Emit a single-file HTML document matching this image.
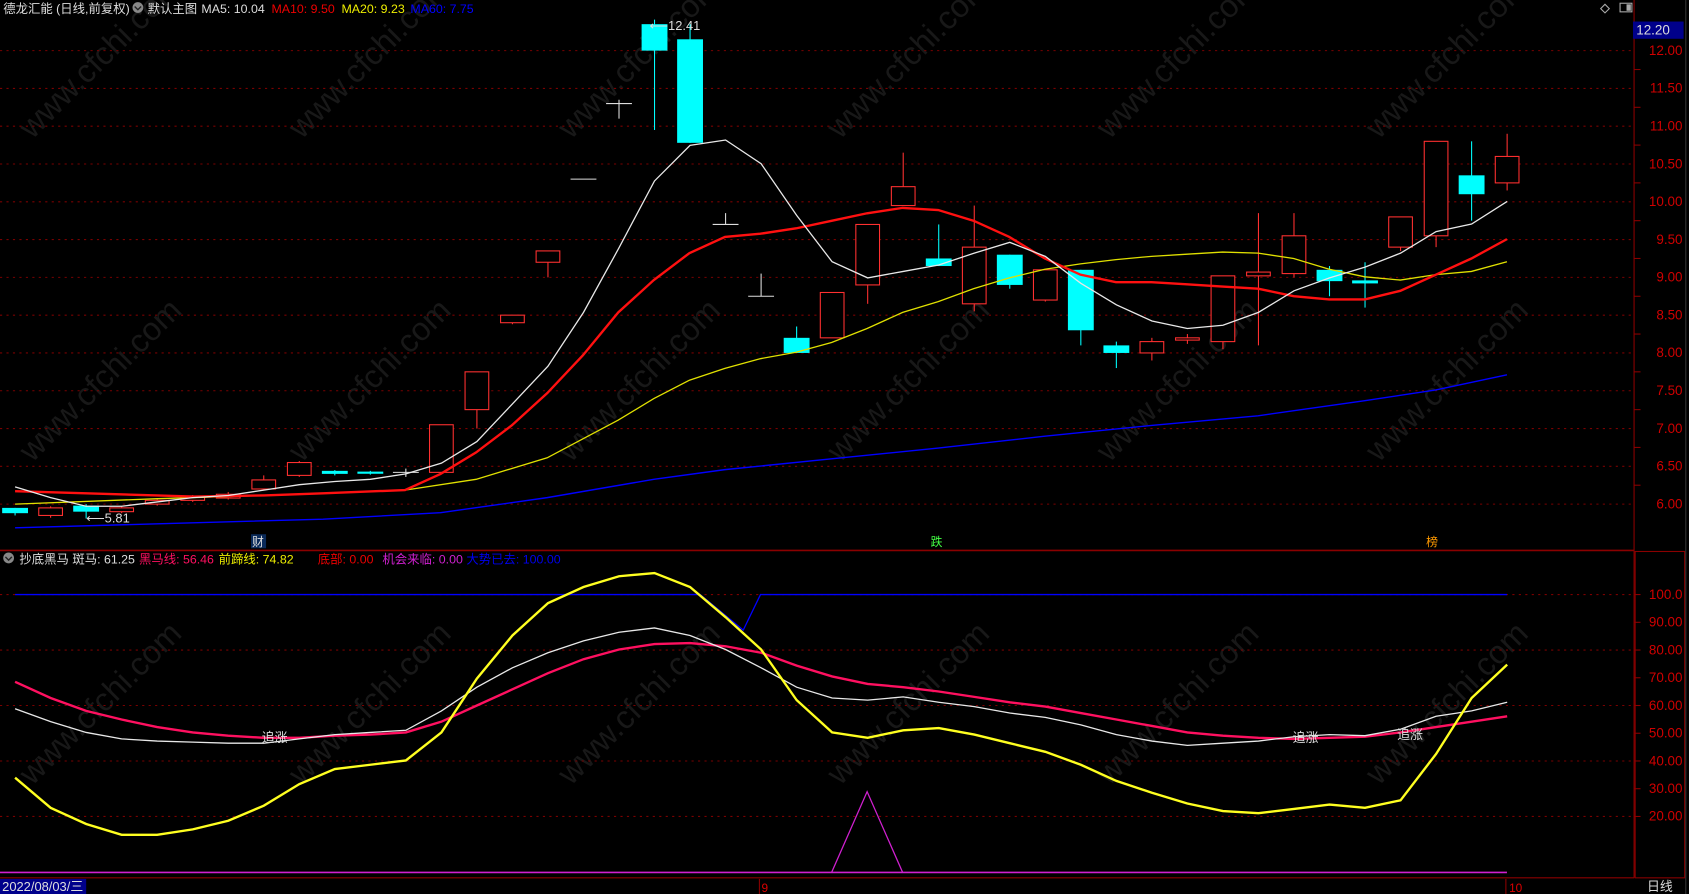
<!DOCTYPE html>
<html><head><meta charset="utf-8"><style>
html,body{margin:0;padding:0;background:#000;overflow:hidden}
svg{display:block}
text{font-family:"Liberation Sans","Noto Sans CJK SC",sans-serif}
</style></head><body>
<svg id="s" width="1689" height="894" viewBox="0 0 1568 830" preserveAspectRatio="none" xmlns="http://www.w3.org/2000/svg">
<rect width="1568" height="830" fill="#000"/>
<g id="wm" fill="#181818" font-size="30"></g>
<g id="grid"></g>
<line x1="0" y1="511" x2="1517" y2="511" stroke="#8b0000" stroke-width="1.5"/>
<line x1="1517" y1="0" x2="1517" y2="815" stroke="#8b0000"/>
<rect x="1518" y="512" width="46" height="303" fill="none" stroke="#8b0000"/>
<line x1="0" y1="815" x2="1517" y2="815" stroke="#8b0000"/>
<line x1="1565" y1="0" x2="1565" y2="830" stroke="#333"/>
<g id="axis" fill="#d00000" font-size="12.5"></g>
<g id="main"></g>
<g id="ind"></g>
<text x="3" y="12" font-size="11.5" fill="#ddd">德龙汇能 (日线,前复权)</text>
<circle cx="128" cy="7" r="5" fill="#888"/><path d="M125,6 l3,3 l3,-3" stroke="#222" fill="none" stroke-width="1.3"/>
<text x="137" y="12" font-size="11.5" fill="#ddd">默认主图</text>
<text x="187" y="12" font-size="11.5" fill="#ddd">MA5: 10.04</text>
<text x="252" y="12" font-size="11.5" fill="#e00">MA10: 9.50</text>
<text x="317" y="12" font-size="11.5" fill="#ee0">MA20: 9.23</text>
<text x="381" y="12" font-size="11.5" fill="#00f">MA60: 7.75</text>
<path d="M1490,4 l4,4 l-4,4 l-4,-4z" stroke="#aaa" fill="none"/>
<rect x="1504" y="3" width="11" height="8" fill="none" stroke="#aaa"/><rect x="1510" y="4" width="4" height="6" fill="#aaa"/>
<rect x="1516" y="20" width="47" height="16" fill="#00008b"/>
<text x="1519" y="32" font-size="12.5" fill="#ddd">12.20</text>
<circle cx="8" cy="518" r="5" fill="#888"/><path d="M5,517 l3,3 l3,-3" stroke="#222" fill="none" stroke-width="1.3"/>
<text x="18" y="523" font-size="11.5" fill="#ddd">抄底黑马  斑马: 61.25</text>
<text x="129" y="523" font-size="11.5" fill="#ff1060">黑马线: 56.46</text>
<text x="203" y="523" font-size="11.5" fill="#ee0">前蹄线: 74.82</text>
<text x="295" y="523" font-size="11.5" fill="#e00">底部: 0.00</text>
<text x="355" y="523" font-size="11.5" fill="#d020d0">机会来临: 0.00</text>
<text x="433" y="523" font-size="11.5" fill="#0000ee">大势已去: 100.00</text>
<rect x="233" y="496" width="14" height="13" fill="#0a2a5a"/><text x="234" y="507" font-size="11" fill="#ddd">财</text>
<text x="864" y="507" font-size="11" fill="#4f4">跌</text>
<text x="1324" y="507" font-size="11" fill="#f90">榜</text>
<text x="603" y="28" font-size="12" fill="#ddd">⟵12.41</text>
<text x="80" y="485" font-size="12" fill="#ddd">⟵5.81</text>
<text x="243" y="689" font-size="12" fill="#ddd">追涨</text>
<text x="1200" y="689" font-size="12" fill="#ddd">追涨</text>
<text x="1297" y="686" font-size="12" fill="#ddd">追涨</text>
<rect x="0" y="816" width="80" height="14" fill="#00008b"/>
<text x="2" y="827" font-size="12" fill="#ddd">2022/08/03/三</text>
<line x1="705" y1="816" x2="705" y2="830" stroke="#8b0000"/><text x="707" y="828" font-size="11" fill="#d00">9</text>
<line x1="1398" y1="816" x2="1398" y2="830" stroke="#8b0000"/><text x="1401" y="828" font-size="11" fill="#d00">10</text>
<text x="1529" y="827" font-size="12" fill="#ddd">日线</text>
</svg>
<script>
var NS="http://www.w3.org/2000/svg";
function el(p,t,a,txt){var e=document.createElementNS(NS,t);for(var k in a)e.setAttribute(k,a[k]);if(txt)e.textContent=txt;document.getElementById(p).appendChild(e);return e;}
function py(p){return 47+(12-p)*70.17;}
function iy(v){return 552+(100-v)*2.575;}
for(var i=0;i<6;i++)for(var j=0;j<3;j++){var x=30+i*250,y=130+j*300;el('wm','text',{x:x,y:y,transform:'rotate(-45 '+x+' '+y+')'},'www.cfchi.com');}
for(var p=6;p<=12.001;p+=0.5){var y=py(p);el('grid','line',{x1:0,y1:y,x2:1517,y2:y,stroke:'#7a0000','stroke-dasharray':'2,4'});el('axis','text',{x:1562,y:y+4,'text-anchor':'end'},p.toFixed(2));}
for(var p=6.25;p<12.2;p+=0.5){el('grid','line',{x1:1517,y1:py(p),x2:1523,y2:py(p),stroke:'#8b0000'});}
[100,80,60,40,20].forEach(function(v){el('grid','line',{x1:0,y1:iy(v),x2:1517,y2:iy(v),stroke:'#7a0000','stroke-dasharray':'2,4'});});
[100,90,80,70,60,50,40,30,20].forEach(function(v){el('axis','text',{x:1562,y:iy(v)+4,'text-anchor':'end'},v==100?'100.0':v.toFixed(2));el('grid','line',{x1:1517,y1:iy(v),x2:1523,y2:iy(v),stroke:'#8b0000'});});
var C=[[5.95,5.88,5.95,5.85],[5.85,5.95,5.97,5.82],[5.98,5.9,6.0,5.81],[5.9,5.95,5.97,5.88],[6.0,6.05,6.07,5.98],[6.05,6.1,6.12,6.03],[6.08,6.13,6.16,6.06],[6.2,6.32,6.38,6.18],[6.38,6.55,6.57,6.36],[6.44,6.4,6.45,6.38],[6.43,6.41,6.44,6.39],[6.42,6.42,6.47,6.36],[6.42,7.05,7.05,6.4],[7.25,7.75,7.75,7.0],[8.4,8.5,8.5,8.38],[9.2,9.35,9.35,9.0],[10.3,10.3,10.3,10.3],[11.3,11.3,11.35,11.1],[12.35,12.0,12.41,10.95],[12.15,10.78,12.35,10.78],[9.7,9.7,9.85,9.7],[8.75,8.75,9.05,8.75],[8.2,8.0,8.35,8.0],[8.2,8.8,8.8,8.2],[8.9,9.7,9.7,8.65],[9.95,10.2,10.65,9.95],[9.25,9.15,9.7,9.15],[8.65,9.4,9.95,8.55],[9.3,8.9,9.3,8.85],[8.7,9.1,9.1,8.68],[9.1,8.3,9.1,8.1],[8.1,8.0,8.15,7.8],[8.0,8.15,8.2,7.9],[8.17,8.2,8.25,8.12],[8.15,9.02,9.02,8.05],[9.02,9.07,9.85,8.1],[9.05,9.55,9.85,9.0],[9.1,8.95,9.15,8.75],[8.96,8.92,9.2,8.6],[9.4,9.8,9.8,9.35],[9.55,10.8,10.8,9.4],[10.35,10.1,10.8,9.75],[10.25,10.6,10.9,10.15]];
C.forEach(function(c,i){var x=14+i*32.98,o=c[0],cl=c[1],h=c[2],l=c[3];
 var up=cl>o+0.001,dn=cl<o-0.001,col=up?'#ff3030':(dn?'#00ffff':'#ddd');
 var t=py(Math.max(o,cl)),b=py(Math.min(o,cl));
 el('main','line',{x1:x,y1:py(h),x2:x,y2:py(l),stroke:col});
 if(up)el('main','rect',{x:x-11,y:t,width:22,height:Math.max(b-t,1),fill:'#000',stroke:col});
 else if(dn)el('main','rect',{x:x-12,y:t,width:24,height:Math.max(b-t,2),fill:col});
 else el('main','line',{x1:x-12,y1:t,x2:x+12,y2:t,stroke:col});
});
function line(g,ys,col,w){var d=ys.map(function(y,i){return (i?'L':'M')+(14+i*32.98).toFixed(1)+','+y;}).join(' ');el(g,'path',{d:d,stroke:col,fill:'none','stroke-width':w});}
function xyline(g,pts,col,w){el(g,'path',{d:'M'+pts.map(function(p){return p.join(',')}).join(' L'),stroke:col,fill:'none','stroke-width':w});}
xyline('main',[[14,490],[300,482],[409,476],[508,462],[607,445],[673,436],[772,426],[871,416],[970,405],[1069,395],[1168,386],[1267,372],[1333,362],[1399,348]],'#0000ff',1.3);
xyline('main',[[14,468],[146,463],[245,460],[376,455],[442,445],[508,425],[574,390],[607,370],[640,353],[673,342],[706,333],[739,327],[772,318],[805,305],[838,290],[871,280],[904,268],[937,258],[970,250],[1003,245],[1036,241],[1069,238],[1102,236],[1135,234],[1168,235],[1201,240],[1234,250],[1267,257],[1300,260],[1333,255],[1366,252],[1399,243]],'#e0e000',1.2);
xyline('main',[[14,456],[180,461],[245,460],[300,458],[376,455],[409,440],[442,420],[475,395],[508,365],[541,330],[574,290],[607,260],[640,235],[673,220],[706,217],[739,212],[772,205],[805,198],[838,193],[871,195],[904,205],[937,220],[970,240],[1003,255],[1036,262],[1069,262],[1102,264],[1135,266],[1168,268],[1201,275],[1234,278],[1267,278],[1300,270],[1333,255],[1366,240],[1399,222]],'#ff1010',2.2);
line('main',[452,462,470,470,466,462,460,455,450,447,445,440,430,410,375,340,290,230,168,135,130,152,200,243,258,252,246,235,225,238,263,283,298,305,302,290,270,258,248,235,215,208,187],'#e8e8e8',1.2);
el('ind','line',{x1:0,y1:810,x2:1399,y2:810,stroke:'#d020d0','stroke-width':1.5});
xyline('ind',[[772,810],[805,735],[838,810]],'#d020d0',1.2);
xyline('ind',[[14,552],[650,552],[690,585],[706,552],[1399,552]],'#0000ff',1.2);
line('ind',[633,648,660,668,675,680,683,685,685,683,682,680,670,655,640,625,612,603,598,597,600,606,618,628,635,638,642,647,652,656,662,668,674,680,683,685,686,685,684,680,675,670,665],'#ff1060',2.2);
line('ind',[658,670,680,686,688,689,690,690,686,682,680,678,660,638,620,606,595,587,583,590,603,620,638,648,650,647,652,656,662,666,673,682,688,692,690,688,684,682,683,677,665,660,652],'#e8e8e8',1.2);
line('ind',[722,750,765,775,775,770,762,748,728,714,710,706,680,630,590,560,545,535,532,545,573,603,650,680,685,678,676,682,690,698,710,725,736,746,753,755,751,747,750,743,700,648,617],'#ffff20',2.2);
</script>
</body></html>
